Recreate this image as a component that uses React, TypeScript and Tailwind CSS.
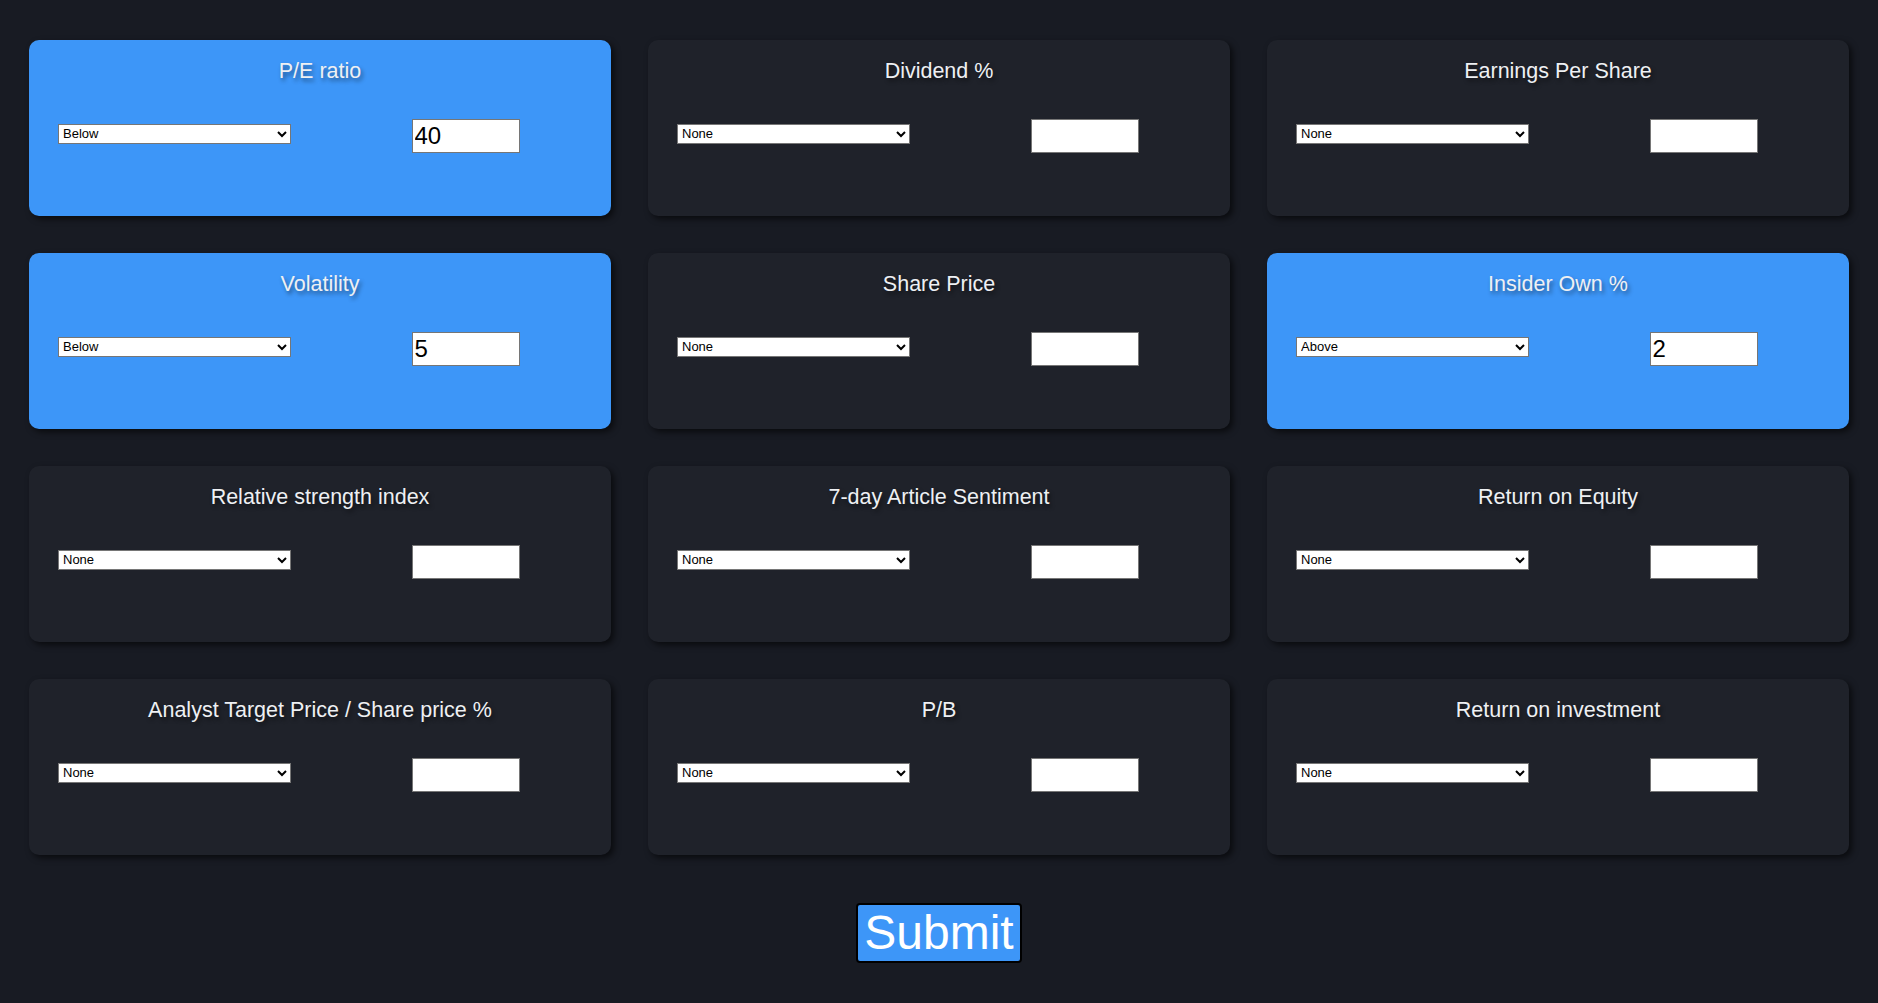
import React from 'react';

type Filter = {
  title: string;
  mode: string;
  value: string;
};

const filters: Filter[] = [
  { title: 'P/E ratio', mode: 'Below', value: '40' },
  { title: 'Dividend %', mode: 'None', value: '' },
  { title: 'Earnings Per Share', mode: 'None', value: '' },
  { title: 'Volatility', mode: 'Below', value: '5' },
  { title: 'Share Price', mode: 'None', value: '' },
  { title: 'Insider Own %', mode: 'Above', value: '2' },
  { title: 'Relative strength index', mode: 'None', value: '' },
  { title: '7-day Article Sentiment', mode: 'None', value: '' },
  { title: 'Return on Equity', mode: 'None', value: '' },
  { title: 'Analyst Target Price / Share price %', mode: 'None', value: '' },
  { title: 'P/B', mode: 'None', value: '' },
  { title: 'Return on investment', mode: 'None', value: '' },
];

const FilterCard: React.FC<{ filter: Filter }> = ({ filter }) => {
  const active = filter.mode !== 'None';

  return (
    <div
      className={`flex flex-col h-[176px] rounded-[10px] pt-[19px] shadow-[3px_3px_6px_rgba(0,0,0,0.6)] ${
        active ? 'bg-[#3d96f8]' : 'bg-[#1f222a]'
      }`}
    >
      <h3 className="text-center text-[21.5px] leading-[24px] text-[#eef0f3] [text-shadow:2px_3px_4px_rgba(0,0,0,0.45)]">
        {filter.title}
      </h3>

      {/* select + value, each centred in its half */}
      <div className="grid grid-cols-2 items-center justify-items-center mt-[36px] h-[34px]">
        <select
          defaultValue={filter.mode}
          className="w-[233px] h-[20px] mb-[5px] bg-white text-black text-[13px] border border-[#767676] font-['Liberation_Sans',Arial,sans-serif]"
        >
          <option>None</option>
          <option>Above</option>
          <option>Below</option>
        </select>
        <input
          type="text"
          defaultValue={filter.value}
          className="w-[108px] h-[34px] bg-white text-black text-[24px] px-[2px] border border-[#767676] font-['Liberation_Sans',Arial,sans-serif]"
        />
      </div>
    </div>
  );
};

export default function App() {
  return (
    <div className="min-h-[1003px] bg-[#181b23] font-['Liberation_Sans',Arial,sans-serif] pt-[40px]">
      <div className="grid grid-cols-[repeat(3,582px)] justify-center gap-x-[37px] gap-y-[37px]">
        {filters.map((f) => (
          <FilterCard key={f.title} filter={f} />
        ))}
      </div>

      <div className="flex justify-center mt-[48px]">
        <button className="h-[60px] px-[6px] bg-[#3d96f8] text-white text-[48px] leading-[54px] border-2 border-black rounded-[4px]">
          Submit
        </button>
      </div>
    </div>
  );
}
